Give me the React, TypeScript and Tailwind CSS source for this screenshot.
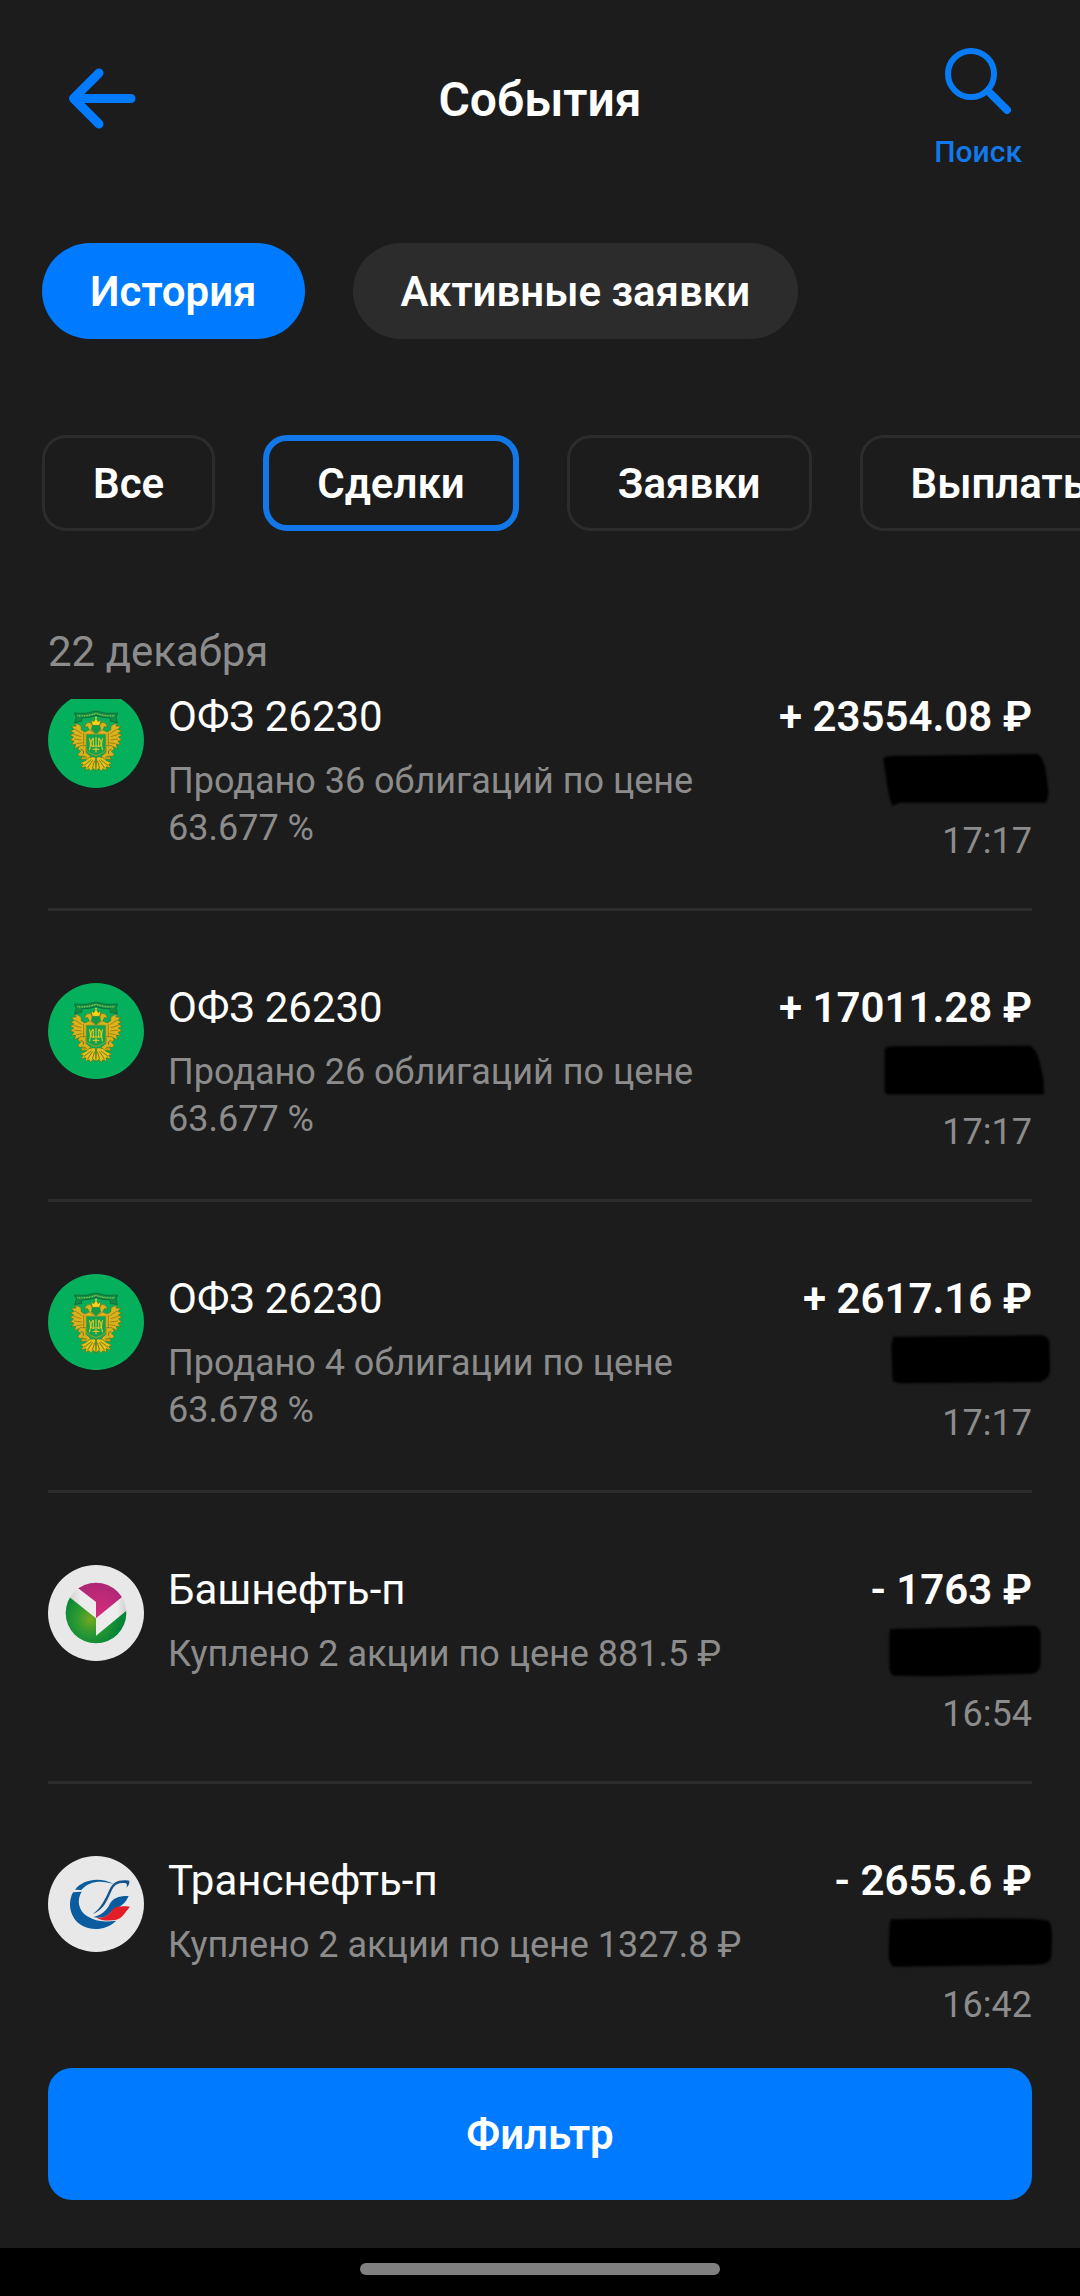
import { useState } from "react";
import type { ReactNode } from "react";
import clsx from "clsx";

interface Deal {
    id: number;
    icon: ReactNode;
    title: string;
    details: string;
    amount: string;
    time: string;
    smudge: string;
}

// left half of the eagle, drawn twice
const EagleHalf = () => (
    <>
        <path d="M194 148 L182 134 L176 150 L164 155 L154 149 L153 137 L144 131 L133 130 L139 137 L123 138 L133 147 L121 152 L132 158 L120 165 L131 170 L120 180 L132 182 L124 194 L137 191 L134 205 L146 199 L150 206 L170 206 L170 163 L194 162 Z" fill="#dcb21d" stroke="#4f6418" strokeWidth="1.5" />
        <path d="M135 146 L156 160 M131 162 L154 169 M132 176 L155 179 M140 190 L158 187 M161 158 V200" stroke="#7d6a12" strokeWidth="2" fill="none" />
        <path d="M186 132 Q180 122 169 129 L163 140 L173 139 L177 148 L190 156 Z" fill="#d9b31e" stroke="#4f6418" strokeWidth="1.5" />
        <path d="M168 196 L150 196 L143 206 L152 213 L143 222 L150 229 L158 226 L152 238 L166 236 L174 242 L182 228 L168 216 Z" fill="#d6b01c" stroke="#4f6418" strokeWidth="1.5" />
        <path d="M152 208 Q163 208 160 220 M158 230 Q168 226 170 234" stroke="#5f6414" strokeWidth="2.5" fill="none" />
        <path d="M196 230 Q176 228 169 240 L149 249 L160 252 L153 262 L168 259 L166 270 L178 265 L181 273 L190 264 L198 272 Z" fill="#e2c21c" stroke="#4f6418" strokeWidth="1.5" />
        <path d="M184 238 L161 256 M188 240 L172 264 M194 241 L187 264" stroke="#6f6712" strokeWidth="2.5" />
    </>
);

const MinfinIcon = () => (
    <svg viewBox="54 35 288 288" className="size-24 shrink-0" aria-hidden="true">
        <circle cx="198" cy="179" r="144" fill="#04b05c" />
        {/* ribbon */}
        <path d="M133 98 Q165 103 198 92 Q231 103 263 98 L258 110 L262 127 L241 123 L240 112 Q220 114 198 106 Q176 114 156 112 L155 123 L134 127 L139 110 Z" fill="#128b45" stroke="#0b5c2c" strokeWidth="2" />
        <path d="M142 106 Q170 109 198 99 Q226 109 254 106" fill="none" stroke="#8fce54" strokeWidth="4" strokeDasharray="3 2" />
        <EagleHalf />
        <g transform="translate(396 0) scale(-1 1)">
            <EagleHalf />
        </g>
        {/* crown and shield */}
        <path d="M183 118 L191 124 L198 113 L205 124 L213 118 L209 135 L187 135 Z" fill="#f5d51b" stroke="#665713" strokeWidth="1.5" />
        <circle cx="198" cy="112" r="3" fill="#f5d51b" />
        <path d="M186 136 H210 L213 148 L198 159 L183 148 Z" fill="#139a48" />
        <path d="M168 161 H228 V210 Q216 221 198 226 Q180 221 168 210 Z" fill="#13a34e" stroke="#b59c1d" strokeWidth="2.5" />
        <path d="M178 174 Q185 192 178 210 M218 174 Q211 192 218 210 M190 173 Q180 183 184 195 Q189 202 195 195 M206 173 Q216 183 212 195 Q207 202 201 195 M198 170 V216 M190 173 V197 M206 173 V197 M188 207 H208" fill="none" stroke="#d8c327" strokeWidth="3.5" />
    </svg>
);

const BashneftIcon = () => (
    <svg viewBox="54 43 288 288" className="size-24 shrink-0" aria-hidden="true">
        <defs>
            <radialGradient id="bash-green" gradientUnits="userSpaceOnUse" cx="182" cy="205" r="90">
                <stop offset="0" stopColor="#74a81f" />
                <stop offset="0.5" stopColor="#2a9932" />
                <stop offset="1" stopColor="#048538" />
            </radialGradient>
            <radialGradient id="bash-pink" gradientUnits="userSpaceOnUse" cx="205" cy="195" r="105">
                <stop offset="0" stopColor="#d72c7c" />
                <stop offset="1" stopColor="#ab2774" />
            </radialGradient>
            <linearGradient id="bash-band" x1="0" x2="1" y1="0" y2="0">
                <stop offset="0" stopColor="#c9c9cb" />
                <stop offset="0.25" stopColor="#ececec" />
                <stop offset="0.85" stopColor="#ececec" />
                <stop offset="1" stopColor="#cfcfd1" />
            </linearGradient>
            <clipPath id="bash-ball">
                <circle cx="198" cy="187" r="91" />
            </clipPath>
        </defs>
        <circle cx="198" cy="187" r="144" fill="#e8e8e8" />
        <g clipPath="url(#bash-ball)">
            <rect x="107" y="96" width="182" height="182" fill="url(#bash-band)" />
            <path d="M100 126 L119 140 L198 203 V255 L300 171 V290 H100 Z" fill="url(#bash-green)" />
            <path d="M139 108 L198 154 V203 L276 139 L290 90 H130 Z" fill="url(#bash-pink)" />
        </g>
    </svg>
);

const TransneftIcon = () => (
    <svg viewBox="54 47 288 288" className="size-24 shrink-0" aria-hidden="true">
        <circle cx="198" cy="191" r="144" fill="#e8e8e8" />
        <path d="M129 156 L155 154 C140 176 144 211 172 228 C197 244 222 246 259 241 C235 263 206 270 177 264 C124 251 108 196 129 156 Z" fill="#0b5c9f" />
        <path d="M135 148 C160 116 211 109 252 132 C215 119 178 122 154 149 Z" fill="#0b5c9f" />
        <path d="M298 121 C265 117 250 124 239 147 C224 180 213 203 188 222 C221 208 231 182 244 153 C253 132 264 128 282 128 C291 128 293 134 289 142 C297 135 299 128 298 121 Z" fill="#16528a" />
        <path d="M296 167 C268 166 248 173 239 192 C229 212 213 226 190 230 C207 235 226 233 240 218 C254 202 282 201 296 167 Z" fill="#0b5c9f" />
        <path d="M300 199 C272 196 254 198 245 211 C233 228 219 233 199 232 C216 242 240 242 259 238 C277 234 286 215 300 199 Z" fill="#e31e26" />
    </svg>
);

const deals: Deal[] = [
    {
        id: 1,
        icon: <MinfinIcon />,
        title: "ОФЗ 26230",
        details: "Продано 36 облигаций по цене 63.677 %",
        amount: "+ 23554.08 ₽",
        time: "17:17",
        smudge: "M10 28 Q12 18 40 18 L470 12 Q485 14 495 50 L505 120 Q505 155 495 158 L60 158 L36 167 Q30 150 22 110 Z",
    },
    {
        id: 2,
        icon: <MinfinIcon />,
        title: "ОФЗ 26230",
        details: "Продано 26 облигаций по цене 63.677 %",
        amount: "+ 17011.28 ₽",
        time: "17:17",
        smudge: "M14 25 Q16 16 40 16 L450 14 Q468 22 478 60 L490 110 L492 160 L20 160 Q12 155 14 130 Z",
    },
    {
        id: 3,
        icon: <MinfinIcon />,
        title: "ОФЗ 26230",
        details: "Продано 4 облигации по цене 63.678 %",
        amount: "+ 2617.16 ₽",
        time: "17:17",
        smudge: "M34 40 L40 14 L480 10 Q505 10 508 30 L510 110 Q512 140 480 150 L60 154 L38 148 Z",
    },
    {
        id: 4,
        icon: <BashneftIcon />,
        title: "Башнефть-п",
        details: "Куплено 2 акции по цене 881.5 ₽",
        amount: "- 1763 ₽",
        time: "16:54",
        smudge: "M28 40 L30 18 L200 14 L450 8 Q476 4 482 30 L482 120 Q480 150 455 152 L180 160 L40 158 Q28 150 28 130 Z",
    },
    {
        id: 5,
        icon: <TransneftIcon />,
        title: "Транснефть-п",
        details: "Куплено 2 акции по цене 1327.8 ₽",
        amount: "- 2655.6 ₽",
        time: "16:42",
        smudge: "M28 40 L32 16 L300 13 L460 14 L505 20 Q516 30 516 70 L514 130 Q510 152 470 152 L40 158 Q26 150 26 120 Z",
    },
];

const tabs = ["История", "Активные заявки"];
const filters = ["Все", "Сделки", "Заявки", "Выплаты"];

const Header = () => (
    <header className="grid grid-cols-[1fr_auto_1fr] items-start px-[58px] pt-11">
        <button type="button" aria-label="Назад" className="mt-4 justify-self-start">
            <svg viewBox="58 60 80 80" className="size-20" fill="none" stroke="#007bff" strokeWidth="9" strokeLinecap="round" strokeLinejoin="round">
                <path d="M99 73 L73.500 98.500 L99 124 M76 98.500 H131" />
            </svg>
        </button>
        <h1 className="mt-7 text-[48px] leading-[56px] font-semibold">События</h1>
        <button type="button" className="flex flex-col items-center gap-4 justify-self-end text-[#1279ea]">
            <svg viewBox="942 44 72 72" className="size-18" fill="none" stroke="#077cf6" strokeLinecap="round" aria-hidden="true">
                <circle cx="971" cy="74" r="23" strokeWidth="6" />
                <path d="M989 92 L1007 110" strokeWidth="8" />
            </svg>
            <span className="text-[30px] leading-10 font-medium">Поиск</span>
        </button>
    </header>
);

const DealRow = ({ deal }: { deal: Deal }) => (
    <li className="flex items-start gap-6 border-b-3 border-[#2c2c2c] pt-18 pb-11">
        {deal.icon}
        <div className="min-w-0 flex-1">
            <p className="text-[42px] leading-[50px]">{deal.title}</p>
            <p className="mt-4 text-[36px] leading-[47px] text-[#8c8c8c]">{deal.details}</p>
        </div>
        <div className="flex shrink-0 flex-col items-end">
            <p className="text-[42px] leading-[50px] font-semibold">{deal.amount}</p>
            <svg viewBox="0 0 528 180" className="-mr-6 mt-2 h-[60px] w-44 overflow-visible blur-[1px]" aria-hidden="true">
                <path d={deal.smudge} fill="#000" />
            </svg>
            <p className="mt-2 text-[36px] leading-[46px] text-[#8c8c8c]">{deal.time}</p>
        </div>
    </li>
);

export default function App() {
    const [tab, setTab] = useState("История");
    const [filter, setFilter] = useState("Сделки");

    return (
        <div className="flex h-screen flex-col overflow-hidden bg-[#1c1c1c] font-[Roboto,sans-serif] text-white">
            <Header />
            <nav className="mt-[71px] flex gap-12 px-[42px]">
                {tabs.map((name) => (
                    <button
                        key={name}
                        type="button"
                        onClick={() => setTab(name)}
                        className={clsx(
                            "h-24 shrink-0 rounded-full px-12 pt-0.5 text-[42px] leading-[50px] font-semibold",
                            tab === name ? "bg-[#007bff]" : "bg-[#2c2c2c]"
                        )}
                    >
                        {name}
                    </button>
                ))}
            </nav>
            <div className="mt-24 flex shrink-0 gap-12 overflow-hidden pl-[42px]">
                {filters.map((name) => (
                    <button
                        key={name}
                        type="button"
                        onClick={() => setFilter(name)}
                        className={clsx(
                            "h-24 shrink-0 rounded-3xl px-12 pt-0.5 text-[42px] leading-[50px] font-semibold",
                            filter === name ? "border-6 border-[#1277e8]" : "border-3 border-[#2c2c2c]"
                        )}
                    >
                        {name}
                    </button>
                ))}
            </div>
            <h2 className="mt-24 mb-[22px] px-12 text-[42px] leading-[50px] text-[#8c8c8c]">22 декабря</h2>
            <main className="min-h-0 flex-1 overflow-hidden px-12">
                {/* list is scrolled a little under the date */}
                <ul className="-mt-[79px]">
                    {deals.map((deal) => (
                        <DealRow key={deal.id} deal={deal} />
                    ))}
                </ul>
            </main>
            <div className="px-12 pb-12">
                <button type="button" className="h-33 w-full rounded-3xl bg-[#007bff] pt-0.5 text-[42px] leading-[50px] font-semibold">
                    Фильтр
                </button>
            </div>
            <div className="flex h-12 shrink-0 justify-center bg-black pt-[15px]">
                <div className="h-3 w-1/3 rounded-full bg-[#808080]" />
            </div>
        </div>
    );
}
